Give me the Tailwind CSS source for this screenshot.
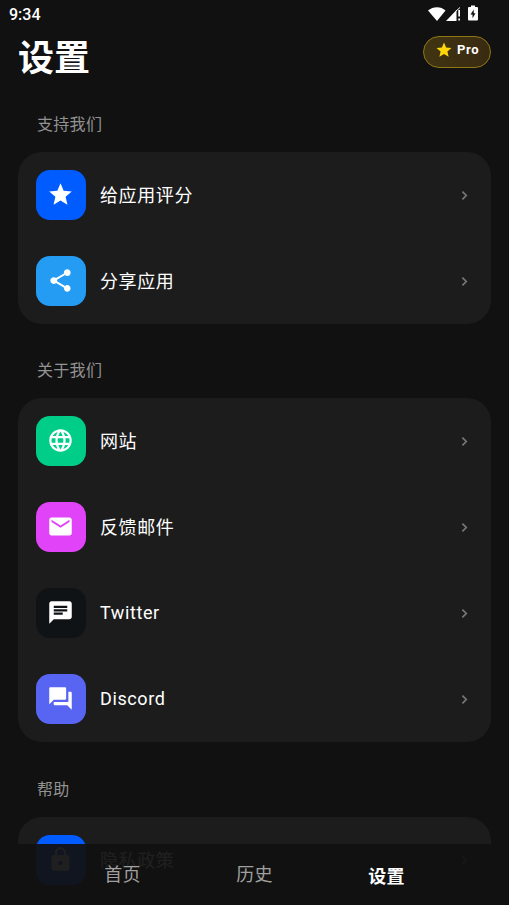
<!DOCTYPE html>
<html lang="zh-CN">
<head>
<meta charset="utf-8">
<title>设置</title>
<script src="https://cdn.jsdelivr.net/npm/@tailwindcss/browser@4"></script>
</head>
<body class="bg-[#111111] font-[Roboto,'Noto_Sans_CJK_SC',sans-serif] text-white">
<svg class="hidden">
  <symbol id="chevron" viewBox="0 0 24 24"><path fill="none" stroke="currentColor" stroke-width="2.4" d="M9 6.500l5.500 5.500-5.500 5.500"/></symbol>
  <symbol id="star" viewBox="0 0 24 24"><path d="M12 17.27L18.18 21l-1.64-7.03L22 9.24l-7.19-.61L12 2 9.19 8.63 2 9.24l5.46 4.73L5.82 21z"/></symbol>
</svg>
<div class="relative h-[905px] w-[509px] overflow-hidden">
  <div class="flex h-7 items-start justify-between pl-[9px] pr-[31px]">
    <span class="pt-px text-base leading-7 font-medium">9:34</span>
    <div class="flex items-center pt-[5px]">
      <svg class="h-[15px] w-[18px]" viewBox="0 0 18 15" fill="#fff"><path d="M0 4.500C5 0 13 0 17.500 4.500L9 15z"/></svg>
      <svg class="h-[15px] w-[15px]" viewBox="0 0 15 15" fill="#fff"><path d="M0 15L10.500 4V15zM12.300 4h1.700v6.500h-1.700zM12.300 12.500h1.700v2h-1.700z"/><path fill="none" stroke="#fff" d="M9.500 5.500L14 1.500"/></svg>
      <svg class="ml-[7px] h-4 w-[10px]" viewBox="0 0 10 16"><path fill="#fff" d="M3 .5h4v1.500h2q1 0 1 1V14.500q0 1-1 1H1q-1 0-1-1V3q0-1 1-1h2z"/><path fill="#111" d="M5.700 4.500L2.500 9.500h2v3.700L7.500 8.200H5.700z"/></svg>
    </div>
  </div>
  <header class="flex h-[70px] items-start justify-between px-[18px] pt-2">
    <h1 class="-mt-[5px] text-[36px] leading-[56px] font-bold">设置</h1>
    <div class="flex h-8 w-[68px] items-center rounded-full border border-[#8f7813] bg-linear-to-r from-[#403411] to-[#392b12] pl-[11px]">
      <svg class="-mt-[5px] size-[18px]" fill="#ffd60a"><use href="#star"/></svg>
      <span class="-mt-1 ml-1 text-[13px] leading-4 font-bold tracking-[0.6px]">Pro</span>
    </div>
  </header>
  <main class="px-[18px]">
    <h2 class="mt-[14px] h-[26px] pl-[19px] text-[16px] leading-[26px] tracking-[0.3px] text-[#929292]">支持我们</h2>
    <section class="mt-[14px] rounded-[24px] bg-[#1c1c1c]">
      <div class="flex h-[86px] items-center px-[18px]">
        <div class="grid size-[50px] place-items-center rounded-[14px] bg-[#005cff]"><svg class="mr-px mb-px size-[27px]" fill="#fff"><use href="#star"/></svg></div>
        <span class="ml-[14px] flex-1 text-[18px] tracking-[0.6px]">给应用评分</span>
        <svg class="size-[17px] text-[#777]"><use href="#chevron"/></svg>
      </div>
      <div class="flex h-[86px] items-center px-[18px]">
        <div class="grid size-[50px] place-items-center rounded-[14px] bg-[#259cf4]"><svg class="mr-px mb-px size-[27px]" viewBox="0 0 24 24" fill="#fff"><path d="M18 16.080c-.76 0-1.440.3-1.960.77L8.910 12.700c.05-.23.09-.46.09-.7s-.04-.47-.09-.7l7.050-4.110c.54.5 1.250.81 2.040.81 1.660 0 3-1.340 3-3s-1.340-3-3-3-3 1.340-3 3c0 .24.04.47.09.7L8.040 9.810C7.500 9.310 6.790 9 6 9c-1.660 0-3 1.340-3 3s1.340 3 3 3c.79 0 1.500-.31 2.040-.81l7.120 4.160c-.05.21-.08.43-.08.65 0 1.610 1.310 2.920 2.920 2.920s2.920-1.310 2.920-2.920-1.310-2.920-2.920-2.920z"/></svg></div>
        <span class="ml-[14px] flex-1 text-[18px] tracking-[0.6px]">分享应用</span>
        <svg class="size-[17px] text-[#777]"><use href="#chevron"/></svg>
      </div>
    </section>
    <h2 class="mt-[34px] h-[26px] pl-[19px] text-[16px] leading-[26px] tracking-[0.3px] text-[#929292]">关于我们</h2>
    <section class="mt-[14px] rounded-[24px] bg-[#1c1c1c]">
      <div class="flex h-[86px] items-center px-[18px]">
        <div class="grid size-[50px] place-items-center rounded-[14px] bg-[#00ce88]"><svg class="mr-px mb-px size-[27px]" viewBox="0 0 24 24" fill="#fff"><path d="M11.990 2C6.470 2 2 6.480 2 12s4.470 10 9.990 10C17.520 22 22 17.520 22 12S17.520 2 11.990 2zm6.930 6h-2.950c-.32-1.250-.78-2.450-1.380-3.560 1.840.63 3.370 1.910 4.330 3.560zM12 4.040c.83 1.200 1.480 2.530 1.910 3.960h-3.820c.43-1.430 1.080-2.760 1.910-3.960zM4.260 14C4.100 13.360 4 12.690 4 12s.1-1.360.26-2h3.380c-.08.66-.14 1.320-.14 2s.06 1.340.14 2H4.260zm.82 2h2.950c.32 1.250.78 2.450 1.380 3.560-1.840-.63-3.370-1.900-4.330-3.560zm2.950-8H5.080c.96-1.660 2.490-2.930 4.330-3.560C8.810 5.550 8.350 6.750 8.030 8zM12 19.960c-.83-1.200-1.480-2.530-1.910-3.960h3.820c-.43 1.430-1.080 2.760-1.910 3.960zM14.340 14H9.660c-.09-.66-.16-1.320-.16-2s.07-1.350.16-2h4.680c.09.65.16 1.320.16 2s-.07 1.340-.16 2zm.25 5.560c.6-1.110 1.060-2.310 1.380-3.560h2.950c-.96 1.650-2.490 2.930-4.330 3.560zM16.360 14c.08-.66.14-1.320.14-2s-.06-1.340-.14-2h3.380c.16.64.26 1.310.26 2s-.1 1.360-.26 2h-3.380z"/></svg></div>
        <span class="ml-[14px] flex-1 text-[18px] tracking-[0.6px]">网站</span>
        <svg class="size-[17px] text-[#777]"><use href="#chevron"/></svg>
      </div>
      <div class="flex h-[86px] items-center px-[18px]">
        <div class="grid size-[50px] place-items-center rounded-[14px] bg-[#e043f8]"><svg class="mr-px mb-px size-[27px]" viewBox="0 0 24 24" fill="#fff"><path d="M20 4H4c-1.100 0-1.990.9-1.990 2L2 18c0 1.100.9 2 2 2h16c1.100 0 2-.9 2-2V6c0-1.100-.9-2-2-2zm0 4l-8 5-8-5V6l8 5 8-5v2z"/></svg></div>
        <span class="ml-[14px] flex-1 text-[18px] tracking-[0.6px]">反馈邮件</span>
        <svg class="size-[17px] text-[#777]"><use href="#chevron"/></svg>
      </div>
      <div class="flex h-[86px] items-center px-[18px]">
        <div class="grid size-[50px] place-items-center rounded-[14px] bg-[#101315]"><svg class="mr-px mb-px size-[27px]" viewBox="0 0 24 24" fill="#fff"><path d="M20 2H4c-1.100 0-1.990.9-1.990 2L2 22l4-4h14c1.100 0 2-.9 2-2V4c0-1.100-.9-2-2-2zM6 9h12v2H6V9zm8 5H6v-2h8v2zm4-6H6V6h12v2z"/></svg></div>
        <span class="mb-px ml-[14px] flex-1 text-[18px] tracking-[0.6px]">Twitter</span>
        <svg class="size-[17px] text-[#777]"><use href="#chevron"/></svg>
      </div>
      <div class="flex h-[86px] items-center px-[18px]">
        <div class="grid size-[50px] place-items-center rounded-[14px] bg-[#5865f2]"><svg class="mr-px mb-px size-[27px]" viewBox="0 0 24 24" fill="#fff"><path d="M21 6h-2v9H6v2c0 .55.45 1 1 1h11l4 4V7c0-.55-.45-1-1-1zm-4 6V3c0-.55-.45-1-1-1H3c-.55 0-1 .45-1 1v14l4-4h10c.55 0 1-.45 1-1z"/></svg></div>
        <span class="mb-px ml-[14px] flex-1 text-[18px] tracking-[0.6px]">Discord</span>
        <svg class="size-[17px] text-[#777]"><use href="#chevron"/></svg>
      </div>
    </section>
    <h2 class="mt-[35px] h-[26px] pl-[19px] text-[16px] leading-[26px] tracking-[0.3px] text-[#929292]">帮助</h2>
    <section class="mt-[14px] h-[172px] rounded-[24px] bg-[#1c1c1c]">
      <div class="flex h-[86px] items-center px-[18px]">
        <div class="grid size-[50px] place-items-center rounded-[14px] bg-[#005cff]"><svg class="mr-px mb-px size-[27px]" viewBox="0 0 24 24" fill="#fff"><path d="M18 8h-1V6c0-2.760-2.240-5-5-5S7 3.240 7 6v2H6c-1.100 0-2 .9-2 2v10c0 1.100.9 2 2 2h12c1.100 0 2-.9 2-2V10c0-1.100-.9-2-2-2zm-6 9c-1.100 0-2-.9-2-2s.9-2 2-2 2 .9 2 2-.9 2-2 2zm3.100-9H8.900V6c0-1.710 1.390-3.100 3.100-3.100 1.710 0 3.100 1.390 3.100 3.100v2z"/></svg></div>
        <span class="ml-[14px] flex-1 text-[18px] tracking-[0.6px]">隐私政策</span>
        <svg class="size-[17px] text-[#777]"><use href="#chevron"/></svg>
      </div>
    </section>
  </main>
  <nav class="absolute inset-x-0 bottom-0 flex h-[61px] justify-center bg-[#111111]/94 text-[18px] leading-[26px] tracking-[0.3px]">
    <span class="w-[132px] pt-[18px] text-center text-[#a0a0a0]">首页</span>
    <span class="w-[132px] pt-[18px] text-center text-[#a0a0a0]">历史</span>
    <span class="w-[132px] pt-5 text-center font-bold">设置</span>
  </nav>
</div>
</body>
</html>
